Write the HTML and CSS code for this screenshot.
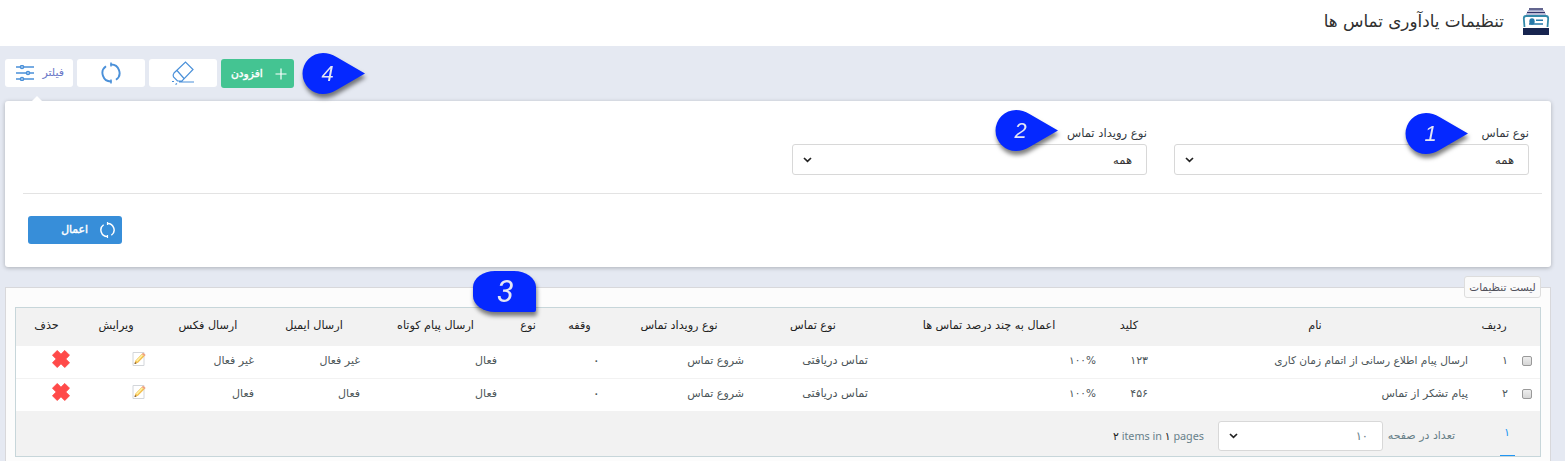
FILE: index.html
```html
<!DOCTYPE html>
<html lang="fa" dir="rtl">
<head>
<meta charset="utf-8">
<title>تنظیمات یادآوری تماس ها</title>
<link rel="stylesheet" href="styles.css">
</head>
<body>
<svg width="0" height="0" class="defs">
  <symbol id="refresh" viewBox="0 0 22 22"><g fill="none" stroke="currentColor" stroke-width="1.9"><path d="M10.500 2.600A8.400 8.400 0 0 1 16 17.800M11.500 19.400A8.400 8.400 0 0 1 6 4.200"/><path d="M11 .6v4M11 17.400v4" stroke-width="1.500"/></g></symbol>
  <symbol id="edit" viewBox="0 0 16 16"><path d="M2 1.500h11v13H2z" fill="#fff" stroke="#d3d6da"/><path d="M3.500 13l.8-3.300 6.400-6.800 2.700 2.400-6.400 6.500z" fill="#f3be4d"/><path d="M5 9.800l5.900-6.200 1.100 1L6.200 10.800z" fill="#fff2a4"/><path d="M10.700 2.900l1.400-1.200 2.600 2.300-1.300 1.300z" fill="#f0a07c"/><path d="M3.500 13l.5-1.900 1.600 1.300z" fill="#705030"/></symbol>
  <symbol id="remove" viewBox="0 0 18 18"><path d="M5 0l4 4 4-4 5 5-4 4 4 4-5 5-4-4-4 4-5-5 4-4-4-4z" fill="#ff4a49" stroke="#ff4a49" stroke-linejoin="round" transform="translate(.5 .5) scale(.944)"/></symbol>
  <symbol id="drop" viewBox="0 0 64 42"><path d="M63 20.500L34.500 37Q28 41 21 41A20.500 20.500 0 0 1 21 0Q28 0 34.500 4z" fill="#0528ff"/></symbol>
</svg>
<div class="page">
  <header class="top">
    <svg class="logo" width="28" height="28" viewBox="0 0 28 28"><path d="M7 1h14M5 4.500h18" stroke="#30336b" stroke-width="1.500"/><path d="M6 2.700h16M4 6.200h20" stroke="#a4a8cb" stroke-width="1.200"/><path d="M2.500 19L1.800 10.500Q1.800 8 4 8h20q2.200 0 2.200 2.500L25.500 19" fill="#fff" stroke="#338aaa" stroke-width="1.800"/><ellipse cx="10" cy="13.500" rx="2.700" ry="3.200" fill="#267aaa"/><path d="M7 16h14M14 12.300h7" stroke="#267aaa" stroke-width="1.600"/><path d="M1 20h26v7H1z" fill="#17244f"/></svg>
    <h1>تنظیمات یادآوری تماس ها</h1>
  </header>
  <nav class="tools">
    <button class="tool add"><svg width="12" height="12" viewBox="0 0 12 12"><path d="M6 .5v11M.5 6h11" stroke="#fff" stroke-width="1.200"/></svg><span>افزودن</span></button>
    <button class="tool"><svg width="24" height="24" viewBox="0 0 24 24" fill="none" stroke="#4a90d9" stroke-width="1.200"><path d="M3 12L14.500 1l7.500 7.500L11 20H6.500L2.500 16q-1-2 .5-4zM6 9.500l7 8M8 21h15"/><path d="M1 20.500h2M4.500 23.500l1.500-1"/></svg></button>
    <button class="tool"><svg class="blue" width="22" height="22"><use href="#refresh"/></svg></button>
    <button class="tool filter"><span>فیلتر</span><svg width="18" height="16" viewBox="0 0 18 16" fill="#fff" stroke="#4a90d9" stroke-width="1.500"><path d="M0 2h18M0 8h18M0 14h18"/><circle cx="6" cy="2" r="1.500"/><circle cx="12" cy="8" r="1.500"/><circle cx="6" cy="14" r="1.500"/></svg></button>
  </nav>
  <section class="panel">
    <div class="fields">
      <label class="field"><span>نوع تماس</span><div class="select"><b>همه</b><svg width="9" height="6" viewBox="0 0 9 6"><path d="M1 1l3.500 3.300L8 1" fill="none" stroke="#222" stroke-width="1.700"/></svg></div></label>
      <label class="field"><span>نوع رویداد تماس</span><div class="select"><b>همه</b><svg width="9" height="6" viewBox="0 0 9 6"><path d="M1 1l3.500 3.300L8 1" fill="none" stroke="#222" stroke-width="1.700"/></svg></div></label>
    </div>
    <div class="actions"><button class="apply"><svg width="17" height="18"><use href="#refresh"/></svg><span>اعمال</span></button></div>
  </section>
  <section class="list">
    <h2><span>لیست تنظیمات</span></h2>
    <div class="grid">
      <div class="row head"><div></div><div>ردیف</div><div>نام</div><div>کلید</div><div>اعمال به چند درصد تماس ها</div><div>نوع تماس</div><div>نوع رویداد تماس</div><div>وقفه</div><div>نوع</div><div>ارسال پیام کوتاه</div><div>ارسال ایمیل</div><div>ارسال فکس</div><div>ویرایش</div><div>حذف</div></div>
      <div class="row"><div><i class="check"></i></div><div>۱</div><div class="name">ارسال پیام اطلاع رسانی از اتمام زمان کاری</div><div>۱۲۳</div><div dir="ltr" class="pct">۱۰۰%</div><div class="type">تماس دریافتی</div><div>شروع تماس</div><div class="wait">۰</div><div></div><div>فعال</div><div>غیر فعال</div><div>غیر فعال</div><div><svg width="16" height="16"><use href="#edit"/></svg></div><div><svg width="18" height="18"><use href="#remove"/></svg></div></div>
      <div class="row"><div><i class="check"></i></div><div>۲</div><div>پیام تشکر از تماس</div><div>۴۵۶</div><div dir="ltr" class="pct">۱۰۰%</div><div class="type">تماس دریافتی</div><div>شروع تماس</div><div class="wait">۰</div><div></div><div>فعال</div><div>فعال</div><div>فعال</div><div><svg width="16" height="16"><use href="#edit"/></svg></div><div><svg width="18" height="18"><use href="#remove"/></svg></div></div>
      <div class="pager"><span class="current">۱</span><span class="per">تعداد در صفحه</span><div class="select small"><b>۱۰</b><svg width="9" height="6" viewBox="0 0 9 6"><path d="M1 1l3.500 3.300L8 1" fill="none" stroke="#222" stroke-width="1.700"/></svg></div><span class="count" dir="ltr"><em>۲</em> items in <em>۱</em> pages</span></div>
    </div>
  </section>
  <div class="pin p1"><svg width="64" height="42"><use href="#drop"/></svg><span>1</span></div>
  <div class="pin p2"><svg width="64" height="42"><use href="#drop"/></svg><span>2</span></div>
  <div class="pin p4"><svg width="64" height="42"><use href="#drop"/></svg><span>4</span></div>
  <div class="pin p3"><span>3</span></div>
</div>
</body>
</html>
```

FILE: styles.css
```css
* { box-sizing: border-box; }
html { background: #fff; }
body { margin: 0; height: 461px; overflow: hidden; font: 11px/16px "DejaVu Sans", sans-serif; color: #333; }
.defs { position: absolute; }
.page { position: relative; width: 1565px; height: 461px; background: #e5e9f2; overflow: hidden; margin-right: 2px; }
.top { height: 46px; background: #fff; display: flex; align-items: flex-start; padding: 8px 15px 0 0; gap: 18px; }
h1 { margin: 0; font-size: 16.8px; font-weight: 400; line-height: 26px; color: #303030; }
.tools { display: flex; justify-content: flex-end; gap: 4px; padding: 13px 0 0 5px; height: 55px; }
button { font: inherit; border: 0; padding: 0; }
.tool { width: 68px; height: 28px; background: #fff; border-radius: 3px; display: flex; align-items: center; justify-content: center; }
.add { width: 73px; height: 29px; background: #44c492; color: #fff; font-size: 10.7px; -webkit-text-stroke: .4px #fff; justify-content: space-between; padding: 0 7px 0 10px; }
.filter { color: #6b78c8; justify-content: space-between; padding: 0 9px 0 11px; }
.blue { color: #4a90d9; }
.panel { position: relative; margin: 0 14px 0 5px; height: 166px; background: #fff; border-radius: 3px; box-shadow: 0 1px 4px rgba(0,0,0,.25); }
.panel::before { content: ""; position: absolute; left: 27px; top: -5px; border: 5px solid transparent; border-top: 0; border-bottom-color: #fff; }
.fields { display: flex; gap: 27px; height: 93px; margin: 0 9px 0 18px; padding: 23px 13px 0 0; border-bottom: 1px solid #e3e3e3; }
.field { width: 355px; }
.field > span { display: block; height: 20px; font-size: 11.6px; line-height: 18px; color: #33383e; }
.select { display: flex; align-items: center; justify-content: space-between; height: 31px; background: #fff; border: 1px solid #d8d8d8; border-radius: 3px; padding: 0 14px 0 10px; }
.select b { font-weight: 400; font-size: 11.5px; }
.actions { direction: ltr; padding: 22px 23px 0; }
.apply { direction: rtl; width: 94px; height: 28px; background: #378ed9; border-radius: 3px; color: #fff; font-size: 10.8px; -webkit-text-stroke: .4px #fff; display: flex; align-items: center; gap: 11px; padding-right: 6px; }
.apply svg { -webkit-text-stroke: 0; }
.list { position: relative; margin: 20px 14px 0 5px; height: 185px; border: 1px solid #d8d8db; background: #fcfcfc; padding: 19px 9px 0 9px; }
h2 { position: absolute; top: -12px; right: 9px; margin: 0; width: 77px; height: 22px; border: 1px solid #ddd; border-radius: 3px; background: #fafafa; font-size: 10.5px; line-height: 20px; font-weight: 400; color: #50505a; text-align: center; white-space: nowrap; }
.grid { width: 1526px; height: 150px; border: 1px solid #c7d6da; background: #f2f2f2; }
.row { display: grid; grid-template-columns: 27px 38px 320px 52px 228px 124px 144px 55px 48px 137px 106px 106px 78px 61px; height: 33px; background: #fff; border-bottom: 1px solid #f2f2f2; color: #4c5659; white-space: nowrap; }
.row > div { padding: 6px 7px 0; line-height: 17px; }
.row > div:nth-child(2) { padding-right: 5px; }
.row > div:first-child { padding: 10px 8px; }
.row > div:nth-child(13) { padding-top: 5px; padding-right: 8px; }
.row > div:nth-child(14) { padding-top: 4px; padding-right: 7px; }
.row > .name { font-size: 10.6px; }
.row > .type { font-size: 11.3px; }
.row > .wait { font-size: 14px; }
.row .pct { text-align: right; font-size: 10.5px; letter-spacing: -1px; }
.row.head { height: 38px; background: #f2f2f2; color: #222; border: 0; font-size: 11.2px; }
.row.head > div { padding: 9px 0 0; text-align: center; }
.check { display: block; width: 10px; height: 10px; border: 1px solid #999; border-radius: 2px; background: linear-gradient(#eee, #d6d6d6); }
.pager { display: flex; height: 44px; align-items: center; padding-right: 25px; color: #667e87; }
.current { width: 15px; height: 44px; line-height: 42px; padding-right: 5px; border-bottom: 1px solid #2196f3; color: #2196f3; }
.per { margin-right: 45px; width: 69px; white-space: nowrap; padding-top: 3px; }
.small { width: 165px; height: 30px; margin-right: 3px; position: relative; top: 2px; }
.small b { color: #667e87; letter-spacing: -1px; }
.count { margin-right: 14px; padding-top: 3px; font: 10.8px/16px "Noto Sans", "DejaVu Sans", sans-serif; color: #67808a; }
.count em { font-style: normal; color: #222; }
.pin { position: absolute; width: 64px; height: 42px; filter: drop-shadow(1px 4px 2px rgba(0,0,0,.5)); direction: ltr; }
.pin svg { display: block; }
.pin span { position: absolute; left: 0; top: 0; width: 51px; text-align: center; font: italic 22px/42px "Liberation Sans", sans-serif; color: #e4e6f4; }
.p1 { left: 1405px; top: 113px; }
.p2 { left: 995px; top: 110px; }
.p4 { left: 302px; top: 53px; }
.p3 { left: 473px; top: 271px; width: 63px; height: 41px; background: #0528ff; border-radius: 22px 22px 2px 22px / 16px 16px 2px 16px; }
.p3 span { width: 65px; font: italic 31px/41px Roboto, sans-serif; }
```
